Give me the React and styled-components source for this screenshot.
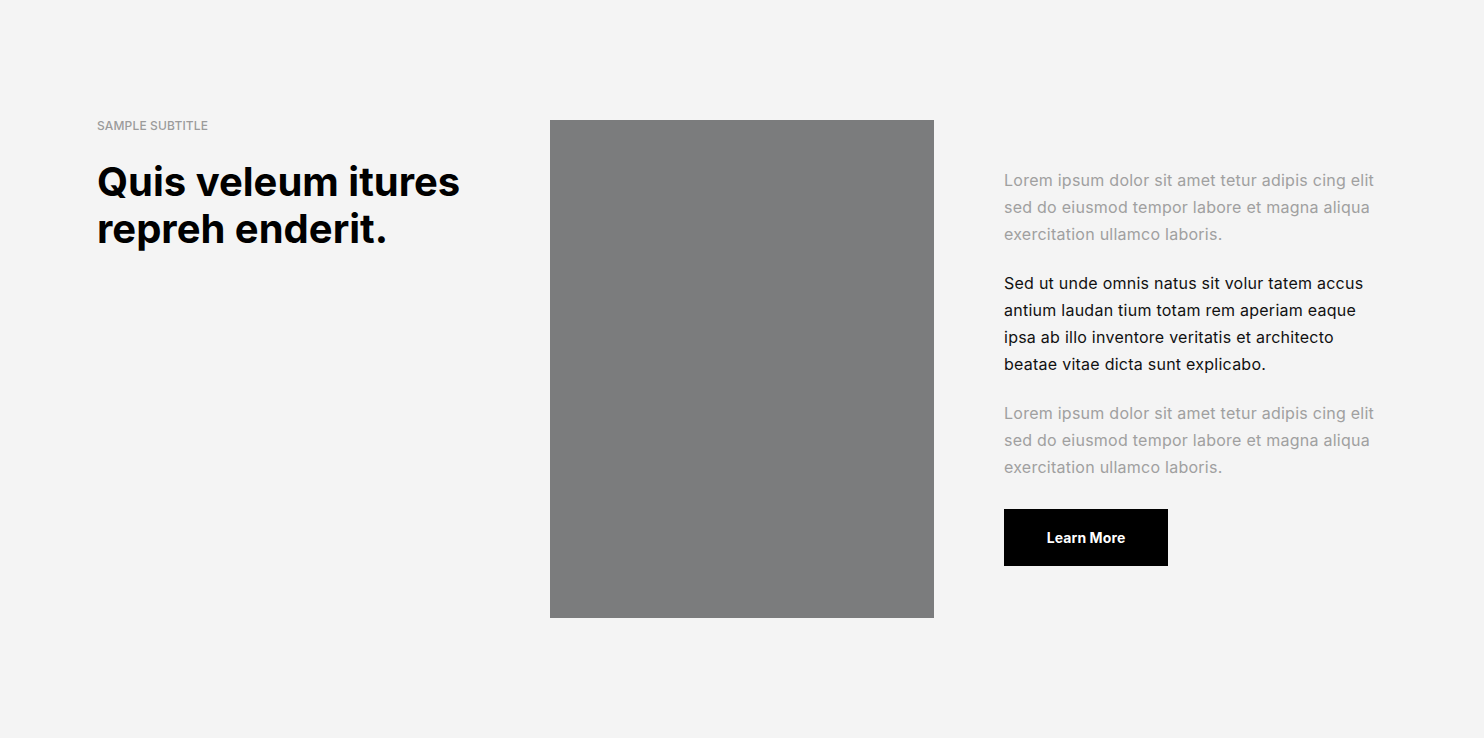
import styled, { createGlobalStyle } from "styled-components";

const GlobalStyle = createGlobalStyle`
  * {
    box-sizing: border-box;
  }
  body {
    margin: 0;
    background-color: #f4f4f4;
    font-family: Inter, "Noto Sans", sans-serif;
  }
`;

const Section = styled.section`
  display: grid;
  grid-template-columns: 1fr 384px 1fr;
  padding: 120px 97px;
  min-height: 738px;
`;

const Intro = styled.div`
  display: flex;
  flex-direction: column;
`;

const Subtitle = styled.p`
  margin: 0;
  font-size: 12px;
  font-weight: 500;
  line-height: 12px;
  color: #9b9b9b;
  letter-spacing: 0.15px;
`;

const Heading = styled.h2`
  margin: 26px 0 0;
  font-size: 40px;
  font-weight: 700;
  line-height: 47px;
  letter-spacing: 0;
  color: #000;
`;

const ImageBox = styled.div`
  height: 498px;
  background-color: #7b7c7d;
`;

const Content = styled.div`
  display: flex;
  flex-direction: column;
  justify-content: center;
  align-items: flex-start;
  padding-left: 70px;
  padding-bottom: 6px;
`;

const Paragraph = styled.p`
  margin: 0 0 22px;
  font-size: 16px;
  line-height: 27px;
  letter-spacing: 0.25px;
  white-space: nowrap;
  color: ${(props) => (props.$muted ? "#a0a0a0" : "#111")};
`;

const Button = styled.button`
  margin-top: 6px;
  width: 164px;
  height: 57px;
  border: none;
  background-color: #000;
  color: #fff;
  font-family: inherit;
  font-size: 14px;
  font-weight: 700;
  letter-spacing: 0.1px;
  cursor: pointer;
`;

export default function App() {
  return (
    <>
      <GlobalStyle />
      <Section>
        <Intro>
          <Subtitle>SAMPLE SUBTITLE</Subtitle>
          <Heading>
            Quis veleum itures
            <br />
            repreh enderit.
          </Heading>
        </Intro>
        <ImageBox />
        <Content>
          <Paragraph $muted>
            Lorem ipsum dolor sit amet tetur adipis cing elit
            <br />
            sed do eiusmod tempor labore et magna aliqua
            <br />
            exercitation ullamco laboris.
          </Paragraph>
          <Paragraph>
            Sed ut unde omnis natus sit volur tatem accus
            <br />
            antium laudan tium totam rem aperiam eaque
            <br />
            ipsa ab illo inventore veritatis et architecto
            <br />
            beatae vitae dicta sunt explicabo.
          </Paragraph>
          <Paragraph $muted>
            Lorem ipsum dolor sit amet tetur adipis cing elit
            <br />
            sed do eiusmod tempor labore et magna aliqua
            <br />
            exercitation ullamco laboris.
          </Paragraph>
          <Button>Learn More</Button>
        </Content>
      </Section>
    </>
  );
}
